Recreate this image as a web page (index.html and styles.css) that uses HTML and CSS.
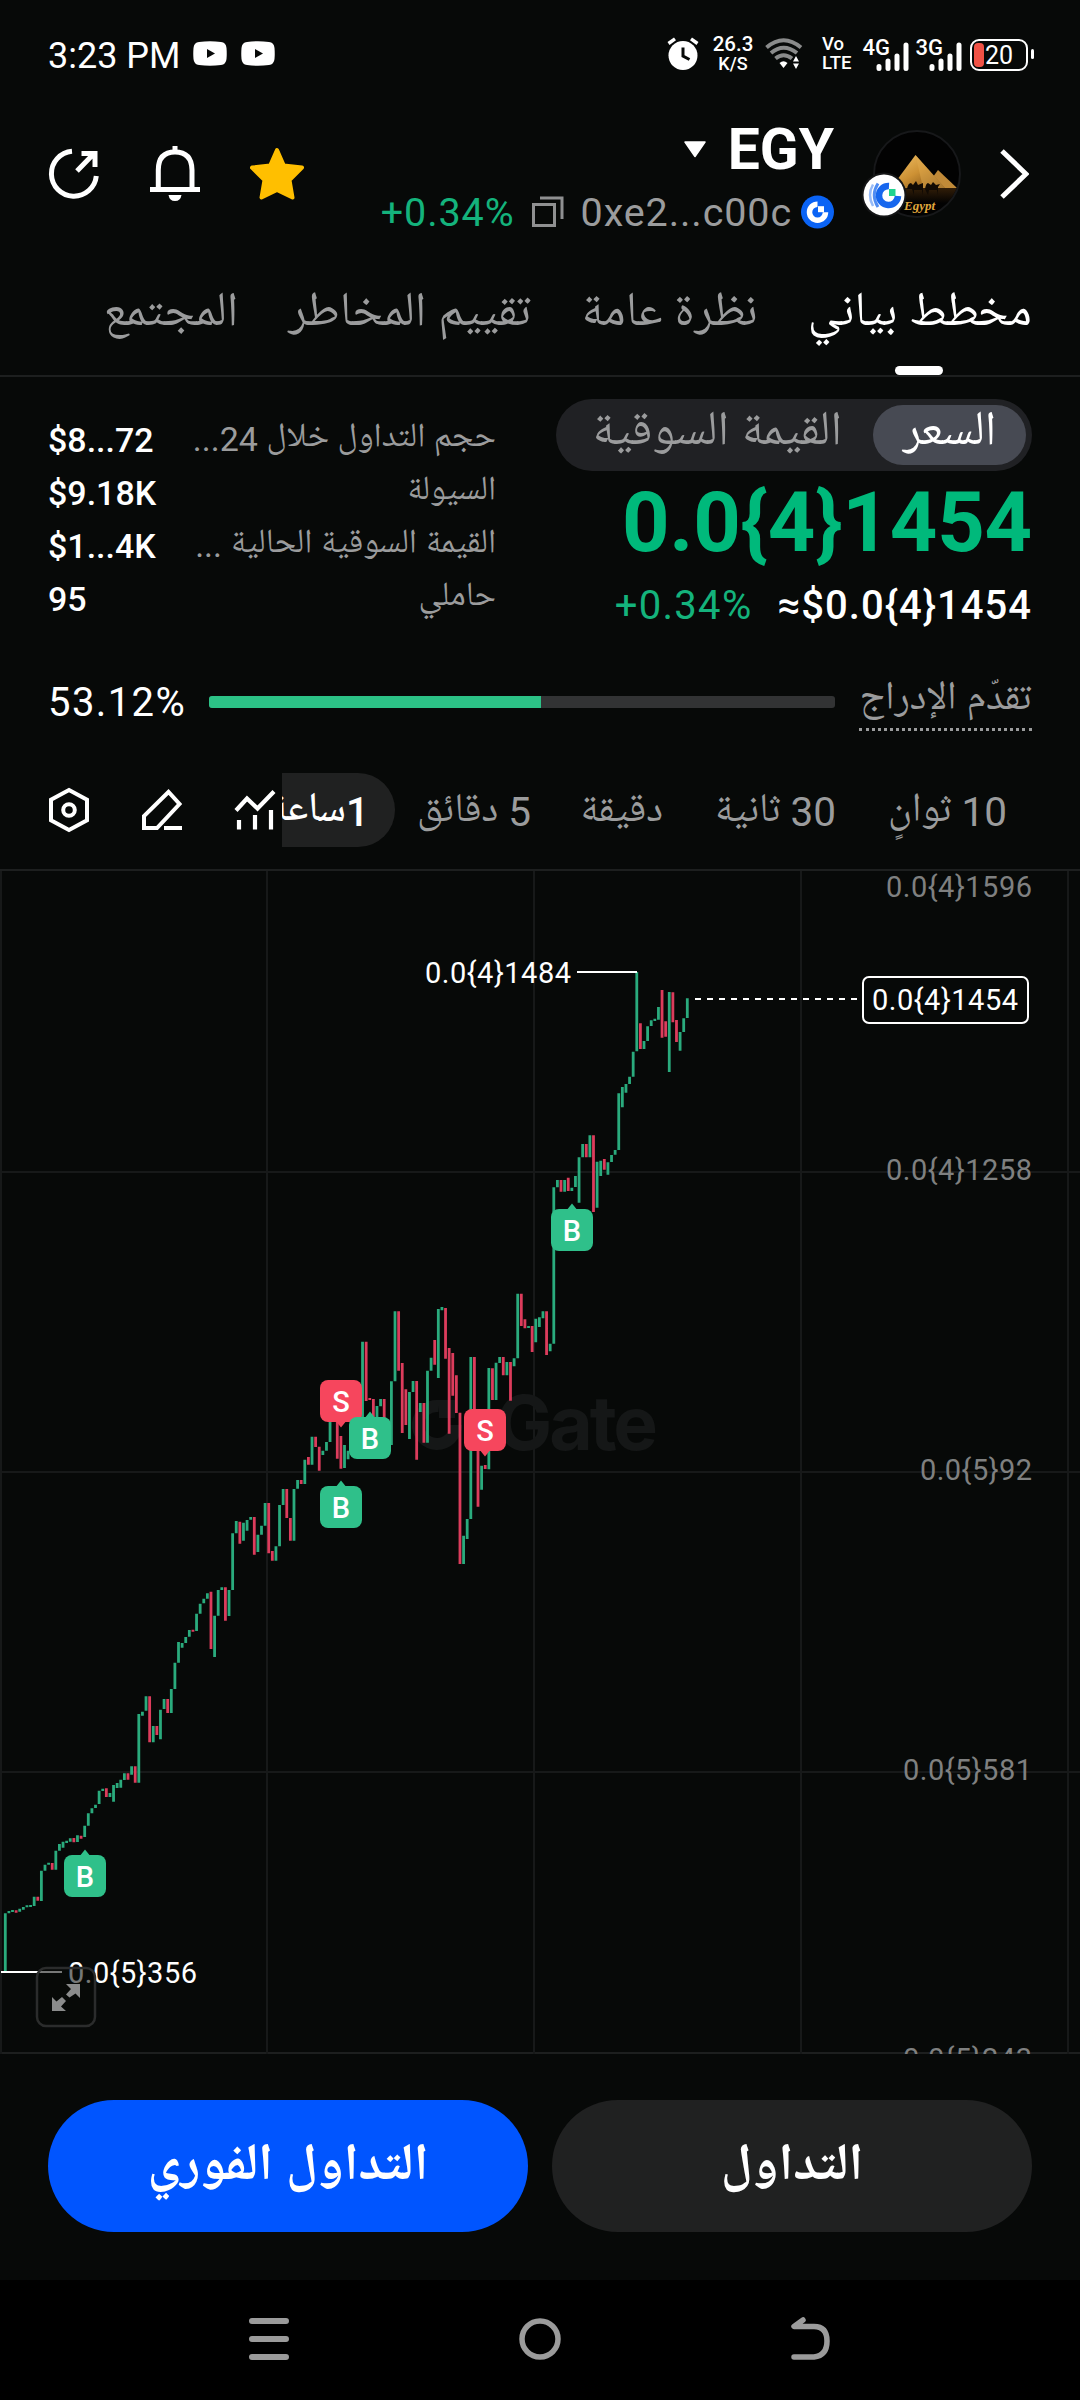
FILE: index.html
```html
<!DOCTYPE html>
<html lang="ar">
<head>
<meta charset="utf-8">
<title>EGY</title>
<link rel="stylesheet" href="styles.css">
</head>
<body>
<div class="app">
  <header class="status">
    <span class="clock">3:23 PM</span>
    <svg class="yt" width="34" height="26" viewBox="0 0 34 26"><path d="M6 1Q17-.6 28 1Q33 1.500 33.500 7Q34 13 33.500 18Q33 23.500 28 24Q17 25.600 6 24Q1 23.500 .5 18Q0 13 .5 7Q1 1.500 6 1Z" fill="#fff"/><path d="M14 8l8 4.500-8 4.500z" fill="#070908"/></svg>
    <svg class="yt yt-second" width="34" height="26" viewBox="0 0 34 26"><path d="M6 1Q17-.6 28 1Q33 1.500 33.500 7Q34 13 33.500 18Q33 23.500 28 24Q17 25.600 6 24Q1 23.500 .5 18Q0 13 .5 7Q1 1.500 6 1Z" fill="#fff"/><path d="M14 8l8 4.500-8 4.500z" fill="#070908"/></svg>
    <span class="spacer"></span>
    <svg class="alarm" width="32" height="34" viewBox="0 0 32 34"><circle cx="16" cy="18.500" r="14.500" fill="#fff"/><path d="M1.500 6.500L8 1.800M30.500 6.500L24 1.800" stroke="#fff" stroke-width="3.400"/><path d="M16 10.500V19l6.500 3.500" fill="none" stroke="#070908" stroke-width="3"/></svg>
    <span class="stack speed"><b>26.3</b><b class="small">K/S</b></span>
    <svg class="wifi" width="38" height="32" viewBox="0 0 38 32"><g fill="none" stroke="#8a8b8b" stroke-width="4"><path d="M1.500 9.500Q18.500-5 36 9.500"/><path d="M6 15Q18.500 4.500 32 15"/><path d="M10.500 20.500Q18.500 14 27 20.500"/></g><path d="M14.500 25q4-3.500 8 0l-4 5z" fill="#fff"/><path d="M28 23.500l3-5.500 3 5.500zM28 25.500l3 5.500 3-5.500z" fill="#fff"/></svg>
    <span class="stack volte"><b>Vo</b><b>LTE</b></span>
    <span class="signal"><b>4G</b><svg width="34" height="30" viewBox="0 0 34 30"><path d="M3 24.500v2M12 19v7.500M21 14v12.500M30 3v23.500" stroke="#fff" stroke-width="5" stroke-linecap="round"/></svg></span>
    <span class="signal"><b>3G</b><svg width="34" height="30" viewBox="0 0 34 30"><path d="M3 24.500v2M12 19v7.500M21 14v12.500M30 3v23.500" stroke="#fff" stroke-width="5" stroke-linecap="round"/></svg></span>
    <span class="battery"><i></i><span>20</span></span>
    <i class="battery-tip"></i>
  </header>

  <section class="head">
    <div class="actions">
      <svg width="52" height="56" viewBox="0 0 52 56" fill="none" stroke="#fff" stroke-width="5"><path d="M24 5.300A22.500 22.500 0 1 0 48.300 30"/><path d="M29 25L46 7.500M33.500 7.500H47V21"/></svg>
      <svg width="50" height="56" viewBox="0 0 50 56" fill="none" stroke="#fff" stroke-width="5"><path d="M8.300 42V24Q8.300 6 25 6T42 24V42"/><path d="M0 43.500H50M25 0v6"/><path d="M18.500 49h13q-1 6-6.500 6t-6.500-6z" fill="#fff" stroke="none"/></svg>
      <svg width="54" height="54" viewBox="1 0 54 54"><path d="M28 3L34.800 18.500L53 20.600L40.500 33L43.500 50.500L28 43L12.500 50.500L15.500 33L3 20.600L21.200 18.500Z" fill="#ffbf00" stroke="#ffbf00" stroke-width="4" stroke-linejoin="round"/></svg>
    </div>
    <div class="token">
      <div class="name-line"><svg width="24" height="17" viewBox="0 0 24 17"><path d="M2 1H22L12 15.500Z" fill="#fff" stroke="#fff" stroke-linejoin="round" stroke-width="1.500"/></svg><span class="name">EGY</span></div>
      <div class="addr-line"><span class="delta">+0.34%</span>
        <svg class="copy" width="32" height="32" viewBox="0 0 32 32" fill="none" stroke="#8f9091" stroke-width="3"><path d="M1.500 8.500H22.500V29.500H1.500zM8 2H30V23"/></svg>
        <span class="addr">0xe2...c00c</span>
        <svg class="gate" width="33" height="34" viewBox="0 0 33 34"><circle cx="16.500" cy="17" r="16.500" fill="#0a63f5"/><path d="M16.500 9.200A8 8 0 1 0 24.500 17.200" fill="none" stroke="#fff" stroke-width="5.500"/><path d="M17 11.200h6v6h-6z" fill="#fff"/></svg></div>
    </div>
    <div class="avatar">
      <svg width="88" height="90" viewBox="0 0 88 90">
        <defs><linearGradient id="sand" x1="0" y1="0" x2="1" y2="1"><stop offset="0" stop-color="#f3c56a"/><stop offset=".5" stop-color="#cd9134"/><stop offset="1" stop-color="#704612"/></linearGradient><linearGradient id="ground" x1="0" y1="0" x2="0" y2="1"><stop offset="0" stop-color="#4a2c0b"/><stop offset="1" stop-color="#030202"/></linearGradient><clipPath id="disc"><circle cx="44" cy="45" r="42"/></clipPath></defs>
        <circle cx="44" cy="45" r="43" fill="#020202" stroke="#17181a" stroke-width="2"/>
        <g clip-path="url(#disc)"><path d="M0 58H88V74H0z" fill="url(#ground)" opacity=".7"/><path d="M65 41L84 59H52z" fill="#c08a38"/><path d="M42.500 26L72 59H18z" fill="url(#sand)"/><path d="M42.500 26L72 59H50z" fill="#e0a94e" opacity=".5"/>
        <path d="M34 60q1-6 4-6l2 2 3-4 2 4 5-2v8l-1 4v-5h-8v5l-2-6zM52 60q1-6 3-6l3 2 2-3 3 3 4-1-2 3v8l-1-5h-8l-1 5z" fill="#100a04"/><text x="31" y="81" class="avatar-text">Egypt</text></g>
      </svg>
      <svg class="badge" width="46" height="48" viewBox="0 0 46 48"><circle cx="23" cy="24" r="22.500" fill="#141516"/><circle cx="23" cy="24" r="20.500" fill="#fff"/><g fill="none" stroke="#1767ee"><path d="M28 15A9.500 9.500 0 1 0 37 25" stroke-width="6.500"/><path d="M17 12.500Q9.500 24 17 36" stroke-width="3" opacity=".75"/><path d="M12 13.500Q6 24 12 35" stroke-width="2.500" opacity=".45"/></g><path d="M28 18h6.500v7H28z" fill="#22d38f"/></svg>
    </div>
    <svg class="chev" width="30" height="50" viewBox="0 0 30 50"><path d="M3 2L27 25L3 48" fill="none" stroke="#fff" stroke-width="5"/></svg>
  </section>

  <nav class="tabs" dir="rtl">
    <span class="tab on">مخطط بياني</span><span class="tab">نظرة عامة</span><span class="tab">تقييم المخاطر</span><span class="tab">المجتمع</span>
  </nav>

  <section class="summary">
    <dl class="stats">
      <div><dt>$8...72</dt><dd dir="rtl">حجم التداول خلال 24...</dd></div>
      <div><dt>$9.18K</dt><dd dir="rtl">السيولة</dd></div>
      <div><dt>$1...4K</dt><dd dir="rtl">القيمة السوقية الحالية ...</dd></div>
      <div><dt>95</dt><dd dir="rtl">حاملي</dd></div>
    </dl>
    <div class="quote">
      <div class="toggle"><span class="opt" dir="rtl">القيمة السوقية</span><span class="opt on">السعر</span></div>
      <div class="price">0.0{4}1454</div>
      <div class="sub"><span class="delta">+0.34%</span><span class="usd">≈$0.0{4}1454</span></div>
    </div>
  </section>

  <section class="progress"><span class="pct">53.12%</span><span class="track"><i></i></span><span class="plabel">تقدّم الإدراج</span></section>

  <section class="tools">
    <div class="tool-icons">
      <svg width="42" height="46" viewBox="0 0 42 46" fill="none" stroke="#fff"><path d="M21 3L39 12.800V33.200L21 43L3 33.200V12.800Z" stroke-width="4"/><circle cx="21" cy="23" r="5.800" stroke-width="4"/></svg>
      <svg width="42" height="42" viewBox="0 0 42 42" fill="none" stroke="#fff" stroke-width="4"><path d="M3 39V27L27.500 3L38.500 15L16 39ZM23 39H41"/></svg>
      <svg width="42" height="42" viewBox="0 0 42 42" fill="none" stroke="#fff" stroke-width="4.200"><path d="M2 21.500L13 9.500L23.500 19.500L40 2.500M5 31v9.500M21 26v14.500M37 21v19.500"/></svg>
    </div>
    <div class="frames" dir="rtl">
      <span class="f1">10 ثوانٍ</span><span class="f2">30 ثانية</span><span class="f3">دقيقة</span><span class="f4">5 دقائق</span><span class="f5">1ساعة</span>
    </div>
  </section>

  <section class="chart">
    <svg id="plot" width="1080" height="1183" viewBox="0 1 1080 1183">
      <path d="M1 0V1184M267 0V1184M534 0V1184M801 0V1184M1068 0V1184M0 302H1080M0 602H1080M0 902H1080" stroke="#171919" stroke-width="2" fill="none"/>
      <g><path d="M439 536A19 19 0 1 0 456 555" fill="none" stroke="#151717" stroke-width="12"/><path d="M439 530h16v18h-16z" fill="#151717"/><text x="496" y="580" class="mark" textLength="162">Gate</text></g>
      <g id="candles"></g>
      <g class="axis">
        <text x="1032" y="27" textLength="146">0.0{4}1596</text><text x="1032" y="310" textLength="146">0.0{4}1258</text><text x="1032" y="610" textLength="112">0.0{5}92</text><text x="1032" y="910" textLength="129">0.0{5}581</text><text x="1032" y="1199" textLength="129">0.0{5}243</text>
      </g>
      <g class="note"><path d="M577 102H637M1 1102H62" stroke="#fff" stroke-width="2"/><text x="425" y="113" textLength="146">0.0{4}1484</text><text x="68" y="1113" textLength="129">0.0{5}356</text></g>
      <path d="M695 129H860" stroke="#fff" stroke-width="2" stroke-dasharray="6 6"/>
      <rect x="863" y="107" width="165" height="46" rx="6" fill="#070908" stroke="#fff" stroke-width="2"/><g class="note"><text x="872" y="140" textLength="146">0.0{4}1454</text></g>
      <g id="markers"></g>
      <rect x="37" y="1098" width="58" height="58" rx="9" fill="#070908" fill-opacity=".55" stroke="#2b2c2c" stroke-width="2.500"/>
      <path d="M66 1114H80V1128L75.500 1123.500L69.500 1127.500L66 1124.500L71 1119ZM66 1141H52V1127L56.500 1131.500L62 1127L66 1131L61 1136.500Z" fill="#8b8c8c"/>
    </svg>
  </section>

  <section class="cta"><button class="primary">التداول الفوري</button><button>التداول</button></section>

  <footer class="sysnav">
    <svg width="42" height="44" viewBox="0 0 42 44"><path d="M4 4H38M4 22H38M4 40H38" stroke="#9b9b9b" stroke-width="6" stroke-linecap="round"/></svg>
    <svg width="44" height="44" viewBox="0 0 44 44"><circle cx="22" cy="22" r="18" fill="none" stroke="#9b9b9b" stroke-width="5.500"/></svg>
    <svg width="44" height="44" viewBox="0 0 44 44"><path d="M14 3L5 9.500H25Q38 9.500 38 24T25 40H5" fill="none" stroke="#9b9b9b" stroke-width="5.500" stroke-linecap="round" stroke-linejoin="round"/></svg>
  </footer>
</div>
<script src="chart.js"></script>
</body>
</html>
```
FILE: styles.css
```css
* { box-sizing: border-box; }
body { margin: 0; background: #070908; color: #fff; font-family: Roboto, "Noto Naskh Arabic UI", "Noto Naskh Arabic", "Noto Sans Arabic", "DejaVu Sans", sans-serif; }
.app { width: 1080px; height: 2400px; overflow: hidden; display: flex; flex-direction: column; }
.app > * { flex: none; }
svg { display: block; flex: none; }
.spacer { flex: 1; }
.delta { color: #14b37c; }

.status { height: 108px; padding: 0 54px 0 48px; display: flex; align-items: center; }
.clock { font-size: 36px; line-height: 110px; width: 145px; white-space: nowrap; padding-top: 3px; }
.yt-second { margin-left: 14px; }
.alarm { margin-right: 14px; }
.stack { display: flex; flex-direction: column; align-items: center; font-size: 20.5px; line-height: 19px; }
.stack b { font-weight: 500; white-space: nowrap; }
.speed { width: 40px; margin-right: 12px; }
.speed .small { font-size: 18px; }
.wifi { margin-right: 19px; }
.volte { align-items: flex-start; width: 32px; margin-right: 10px; font-size: 18.5px; line-height: 19px; }
.signal { width: 46px; height: 36px; display: flex; justify-content: flex-end; align-items: flex-end; margin-right: 7px; }
.signal b { font-size: 22px; line-height: 24px; font-weight: 500; align-self: flex-start; margin-right: -14px; white-space: nowrap; }
.battery { width: 58px; height: 32px; border: 2px solid #fff; border-radius: 9px; display: flex; align-items: center; padding: 2px; font-size: 25px; margin-top: 2px; }
.battery i { width: 10px; height: 24px; border-radius: 4px; background: #f05246; margin-right: 1px; }
.battery-tip { width: 3px; height: 10px; background: #fff; margin-left: 3px; margin-right: -8px; border-radius: 2px; }

.head { height: 156px; display: flex; padding: 0 51px 0 48px; align-items: center; }
.actions { display: flex; gap: 50px; align-items: center; margin-top: -24px; flex: 1; }
.token { display: flex; flex-direction: column; align-items: flex-end; height: 156px; }
.name-line { display: flex; align-items: center; height: 83px; gap: 21px; }
.name { font-size: 57px; font-weight: 700; }
.addr-line { display: flex; align-items: center; height: 42px; font-size: 39.5px; white-space: nowrap; letter-spacing: .9px; }
.copy { margin: 0 17px; }
.addr { color: #9b9c9d; margin-right: 9px; }
.avatar { position: relative; width: 88px; height: 90px; margin: -24px 38px 0 39px; }
.badge { position: absolute; left: -12px; top: 42px; }
.avatar-text { font: italic 700 13px "Liberation Serif", serif; fill: #e0a83c; }
.chev { margin-top: -24px; }

.tabs { height: 113px; border-bottom: 2px solid #1d1f1f; display: flex; padding: 0 48px; gap: 50px; font-size: 48.5px; color: #9b9c9d; }
.tab { line-height: 104px; white-space: nowrap; position: relative; }
.tab.on { color: #fff; }
.tab.on::after { content: ""; position: absolute; bottom: 0; left: 50%; width: 48px; height: 9px; margin-left: -25px; border-radius: 5px; background: #fff; }

.summary { height: 263px; display: flex; justify-content: space-between; padding: 22px 48px 0; }
.stats { margin: 14px 0 0; width: 448px; }
.stats div { display: flex; justify-content: space-between; height: 53px; align-items: center; }
.stats dt { font-size: 34px; font-weight: 500; }
.stats dd { margin: 0; font-size: 34px; line-height: 55px; color: #9b9c9d; white-space: nowrap; }
.quote { display: flex; flex-direction: column; align-items: flex-end; }
.toggle { width: 476px; height: 72px; border-radius: 36px; background: #202124; display: flex; align-items: center; justify-content: space-between; padding: 6px 6px 6px 36px; font-size: 48.5px; line-height: 60px; color: #9b9c9d; }
.opt { white-space: nowrap; }
.opt.on { width: 153px; height: 60px; line-height: 60px; text-align: center; border-radius: 30px; background: #474a53; color: #fff; }
.price { color: #00b97b; font-size: 83px; font-weight: 700; line-height: 104px; letter-spacing: -.2px; }
.sub { display: flex; gap: 25px; font-size: 40px; line-height: 62px; font-weight: 500; letter-spacing: 1px; }
.sub .delta { font-weight: 400; letter-spacing: 1.3px; }

.progress { height: 124px; display: flex; align-items: center; padding: 0 48px; }
.pct { width: 161px; font-size: 40px; letter-spacing: 1.4px; }
.track { width: 626px; height: 12px; border-radius: 3px; background: #323334; display: flex; overflow: hidden; }
.track i { width: 332px; background: #2cc286; }
.plabel { flex: 1; margin-left: 24px; border-bottom: 3px dotted #9b9c9d; color: #9b9c9d; text-align: center; font-size: 40px; line-height: 54px; white-space: nowrap; }

.tools { height: 107px; display: flex; align-items: center; border-bottom: 2px solid #1d1f1f; padding: 0 0 14px 48px; }
.tool-icons { width: 234px; display: flex; align-items: center; gap: 51px; }
.frames { width: 798px; height: 74px; display: flex; overflow: hidden; font-size: 40.5px; line-height: 79px; color: #9b9c9d; padding-right: 73px; white-space: nowrap; }
.frames span { flex: none; height: 74px; }
.f1 { width: 121px; margin-left: 50px; }
.f2 { width: 120px; margin-left: 53px; }
.f3 { width: 79px; margin-left: 53px; }
.f4 { width: 109px; margin-left: 27px; }
.f5 { width: 164px; padding-right: 26px; background: #202121; border-radius: 37px; color: #fff; font-weight: 500; }

.chart { height: 1183px; border-bottom: 2px solid #1d1f1f; }
.mark { font: 700 75px Inter, sans-serif; fill: #151717; }
.axis text { font-size: 29px; fill: #7f8080; text-anchor: end; }
.note text { font-size: 29px; fill: #fff; }
.flag { font-size: 29px; font-weight: 500; fill: #fff; text-anchor: middle; }

.cta { height: 226px; padding: 46px 48px 48px; display: flex; gap: 24px; }
.cta button { flex: 1; border: 0; border-radius: 66px; background: #202121; color: #fff; font-family: inherit; font-size: 52px; line-height: 80px; font-weight: 700; padding: 5px 0 0; }
.cta .primary { background: #0055ff; }
.sysnav { height: 120px; background: #000; display: flex; align-items: center; justify-content: space-between; padding: 0 247px 2px 248px; }
```
FILE: chart.js
```js
// Candle ranges are "colour top bottom" in thirds of a pixel; each block has its own vertical offset.
const blocks = [
  [2190, "g940 1115,g933 940,g930 936,r931 938,g926 935,g921 929,g916 922,g915 921,g890 918,r890 902,g812 903,g794 812,g788 794,r789 809,g752 809,g732 752,g725 743,g722 729,g715 725,r714 727,g706 726,r707 716,g677 711,g640 677,g625 640,g614 624,g572 612,g566 573,r565 591,g579 591,g555 605,g549 564,g539 563,g520 540,r520 539,g499 524,r499 548,g342 548,g335 347,g289 332,r289 427,g378 427,r378 405,g329 418,g297 327,r297 339,g267 339,g188 267,g126 188,g129 143,g111 129,g90 110,r89 95,g41 93,g11 41"],
  [1140, "g1046 1060,g1030 1046,r1025 1197,g1097 1221,g1020 1097,g1012 1020,r1012 1112,g1020 1098,g850 1020,g813 850,r815 881,g818 872,g810 842,g801 809,r801 914,g854 906,g827 854,g759 827,r759 910,r903 932,g889 932,g765 889,g717 765,r717 804,r804 872,g717 872,g690 716,r690 702,g629 702,r621 644,g560 644,r560 591,r590 662,g602 615,g576 602,g510 576,g480 515,r480 626,r558 656,g585 654,g602 628,g560 602,g520 560,g490 520,g275 520,r275 453,r444 450,r447 520,g468 510,g447 469,r447 520,r510 580,g394 585,g184 394,r184 362,r339 549,r418 525,g426 567,g393 426,r393 629,g459 486,r459 578,g362 578,g323 362,r270 344,g177 384,g171 181,r174 326,r294 551,r309 437,r376 489,r488 942,g857 942,g807 867,g321 807,r321 500,r480 770,g647 719,r645 657,g354 658,r355 450,g338 450,g321 339,r321 376,g336 376,r336 452,g325 349,g131 325,r131 228,r208 235,g228 234,r228 306,g206 277,g202 231"],
  [240, "g1084 1105,r1084 1215,g1181 1204,g712 1181,g690 712,r690 725,g690 725,r683 723,g713 723,g678 711,g622 758,g582 622,r582 622,g556 622,r556 786,g635 773,g632 678,r627 659,g637 674,g615 636,g600 614,g430 600,g411 472,g402 428,g380 402,g305 380,g66 304,r220 297,g273 297,g229 273,g211 228,g206 213,g171 209,r120 263,r214 260,g126 366,r127 217,r210 276,g246 302,g205 246,g145 204"]
];
const paths = { g: "", r: "" };
let i = 0;
for (const [offset, list] of blocks) {
  for (const item of list.split(",")) {
    const [top, bottom] = item.slice(1).split(" ").map(Number);
    const x = (5.3 + i * 3.6085).toFixed(2);
    paths[item[0]] += `M${x} ${((top + offset) / 3).toFixed(1)}V${((bottom + offset) / 3).toFixed(1)}`;
    i++;
  }
}
document.getElementById("candles").innerHTML =
  `<path d="${paths.g}" stroke="#2aab7d" stroke-width="2.8"/><path d="${paths.r}" stroke="#dc3c5c" stroke-width="2.8"/>`;

// Trade markers: letter, centre x, centre y. Buys point up, sells point down.
const trades = [["S", 341, 531], ["B", 370, 568], ["B", 341, 637], ["S", 485, 560], ["B", 572, 360], ["B", 85, 1006]];
document.getElementById("markers").innerHTML = trades.map(([t, x, y]) => {
  const buy = t === "B";
  const tip = buy ? `M${x - 4} ${y - 20}L${x} ${y - 25}L${x + 4} ${y - 20}Z` : `M${x - 4} ${y + 20}L${x} ${y + 25}L${x + 4} ${y + 20}Z`;
  const fill = buy ? "#2fc08a" : "#f6465d";
  return `<g><rect x="${x - 21}" y="${y - 21}" width="42" height="42" rx="8" fill="${fill}"/><path d="${tip}" fill="${fill}" stroke="${fill}" stroke-width="2"/><text class="flag" x="${x}" y="${y + 10.5}">${t}</text></g>`;
}).join("");
```
